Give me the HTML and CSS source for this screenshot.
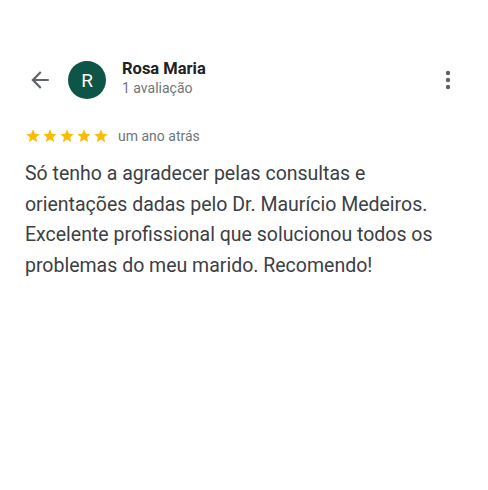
FILE: index.html
```html
<!DOCTYPE html>
<html lang="pt">
<head>
<meta charset="utf-8">
<link rel="stylesheet" href="styles.css">
</head>
<body>
<div class="review">
  <div class="header">
    <svg class="back" width="24" height="24" viewBox="0 0 24 24"><path d="M20 11H7.83l5.59-5.59L12 4l-8 8 8 8 1.41-1.41L7.83 13H20v-2z" fill="#5f6368"/></svg>
    <div class="avatar">R</div>
    <div class="who">
      <div class="name">Rosa Maria</div>
      <div class="count">1 avaliação</div>
    </div>
    <svg class="more" width="24" height="24" viewBox="0 0 24 24"><circle cx="12" cy="5" r="2.2" fill="#5f6368"/><circle cx="12" cy="12" r="2.2" fill="#5f6368"/><circle cx="12" cy="19" r="2.2" fill="#5f6368"/></svg>
  </div>
  <div class="meta">
    <div class="stars">
      <svg viewBox="0 0 24 24"><path d="M12 17.27L18.18 21l-1.64-7.03L22 9.24l-7.19-.61L12 2 9.19 8.63 2 9.24l5.46 4.73L5.82 21z"/></svg>
      <svg viewBox="0 0 24 24"><path d="M12 17.27L18.18 21l-1.64-7.03L22 9.24l-7.19-.61L12 2 9.19 8.63 2 9.24l5.46 4.73L5.82 21z"/></svg>
      <svg viewBox="0 0 24 24"><path d="M12 17.27L18.18 21l-1.64-7.03L22 9.24l-7.19-.61L12 2 9.19 8.63 2 9.24l5.46 4.73L5.82 21z"/></svg>
      <svg viewBox="0 0 24 24"><path d="M12 17.27L18.18 21l-1.64-7.03L22 9.24l-7.19-.61L12 2 9.19 8.63 2 9.24l5.46 4.73L5.82 21z"/></svg>
      <svg viewBox="0 0 24 24"><path d="M12 17.27L18.18 21l-1.64-7.03L22 9.24l-7.19-.61L12 2 9.19 8.63 2 9.24l5.46 4.73L5.82 21z"/></svg>
    </div>
    <span class="when">um ano atrás</span>
  </div>
  <p class="text">Só tenho a agradecer pelas consultas e orientações dadas pelo Dr. Maurício Medeiros. Excelente profissional que solucionou todos os problemas do meu marido. Recomendo!</p>
</div>
</body>
</html>
```
FILE: styles.css
```css
html, body { margin: 0; padding: 0; background: #fff; }
body { font-family: Roboto, "Noto Sans", sans-serif; width: 488px; height: 490px; }
.review { padding: 58px 24px 0 25px; }
.header { display: flex; align-items: center; height: 44px; }
.back { width: 26px; height: 26px; margin-left: 2px; margin-right: 15px; }
.avatar { width: 38px; height: 38px; border-radius: 50%; background: #0d5547; color: #fff; display: flex; align-items: center; justify-content: center; font-size: 19px; margin-right: 16px; }
.who { flex: 1; display: flex; flex-direction: column; padding-bottom: 4px; }
.name { font-size: 16.5px; font-weight: 700; color: #202124; line-height: 20px; }
.count { font-size: 14px; color: #70757a; line-height: 19px; }
.more { width: 24px; height: 24px; margin-right: 4px; }
.meta { display: flex; align-items: center; margin-top: 25px; height: 18px; }
.stars { display: flex; gap: 1px; margin-right: 9px; }
.stars svg { width: 16px; height: 16px; fill: #fbbc04; }
.when { font-size: 14px; color: #70757a; }
.text { margin: 14px 0 0; width: 440px; font-size: 19.5px; line-height: 30.5px; color: #3c4043; }
```
